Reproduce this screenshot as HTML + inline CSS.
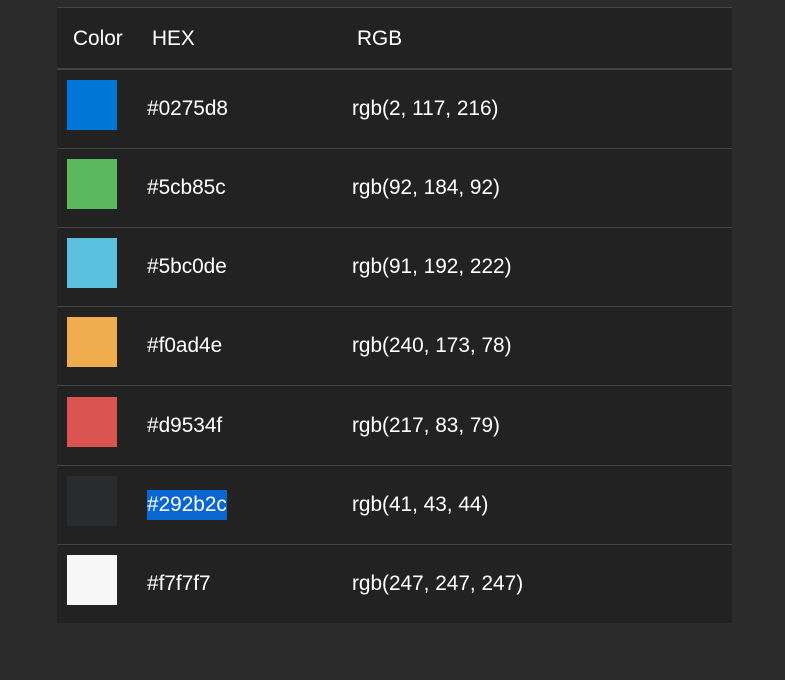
<!DOCTYPE html>
<html><head><style>
body{margin:0;background:#2b2b2b;width:785px;height:680px;position:relative;overflow:hidden;font-family:"Liberation Sans",sans-serif;color:#fff;font-size:20.8px}
.t{position:absolute;left:57px;top:7px;width:675px;height:615px;background:#222;border-top:1px solid #41454a}
.h{position:absolute;top:0;left:0;width:675px;height:60px;border-bottom:2px solid #41454a}
.h span{position:absolute;top:19px}
.r{position:absolute;left:0;width:675px;height:78px;border-bottom:1px solid #41454a}
.r:last-child{border-bottom:none}
.sw{position:absolute;left:10px;top:10px;width:50px;height:50px}
.hx{position:absolute;left:90px;top:27px}
.rg{position:absolute;left:295px;top:27px}
</style></head><body>
<div class="t">
<div class="h"><span style="left:16px">Color</span><span style="left:95px">HEX</span><span style="left:300px">RGB</span></div>
<div class="r" style="top:62px"><div class="sw" style="background:#0275d8"></div><span class="hx">#0275d8</span><span class="rg">rgb(2, 117, 216)</span></div>
<div class="r" style="top:141px"><div class="sw" style="background:#5cb85c"></div><span class="hx">#5cb85c</span><span class="rg">rgb(92, 184, 92)</span></div>
<div class="r" style="top:220px"><div class="sw" style="background:#5bc0de"></div><span class="hx">#5bc0de</span><span class="rg">rgb(91, 192, 222)</span></div>
<div class="r" style="top:299px"><div class="sw" style="background:#f0ad4e"></div><span class="hx">#f0ad4e</span><span class="rg">rgb(240, 173, 78)</span></div>
<div class="r" style="top:378px;height:79px"><div class="sw" style="background:#d9534f;top:11px"></div><span class="hx" style="top:28px">#d9534f</span><span class="rg" style="top:28px">rgb(217, 83, 79)</span></div>
<div class="r" style="top:458px"><div class="sw" style="background:#292b2c"></div><span class="hx" style="background:#0a66d0;top:24px;height:30px;line-height:30px">#292b2c</span><span class="rg">rgb(41, 43, 44)</span></div>
<div class="r" style="top:537px"><div class="sw" style="background:#f7f7f7"></div><span class="hx">#f7f7f7</span><span class="rg">rgb(247, 247, 247)</span></div>
</div>
</body></html>
